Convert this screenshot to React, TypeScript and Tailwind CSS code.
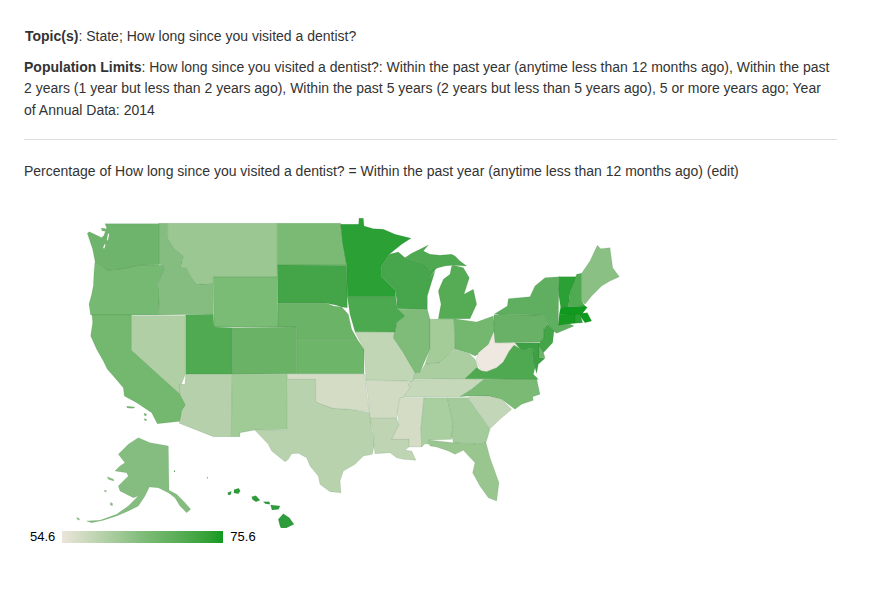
type Shape = { id: string; fill: string; pts: string }

const west: Shape[] = [
  { id: 'OR', fill: '#76b972', pts: '75,165 103,185 118,192 160,186 210,176 280,178 284,190 262,238 268,250 266,327 62,327 57,295 65,265 70,240 72,200' },
  { id: 'ID', fill: '#85bd80', pts: '266,52 293,52 293,95 310,125 340,150 333,185 348,185 365,215 380,235 430,232 430,325 266,327 268,250 262,238 284,190 280,178 266,175' },
  { id: 'MT', fill: '#9ac792', pts: '293,52 622,52 622,213 430,213 430,232 380,235 365,215 348,185 333,185 340,150 310,125 293,95' },
  { id: 'WY', fill: '#7abb75', pts: '430,213 622,213 624,363 432,363' },
  { id: 'ND', fill: '#7aba74', pts: '622,52 812,52 820,110 830,177 622,177' },
  { id: 'SD', fill: '#43a547', pts: '622,177 830,178 832,305 815,303 800,298 770,292 624,292' },
  { id: 'NE', fill: '#6bb367', pts: '624,292 770,292 790,300 815,303 835,325 845,370 862,400 680,400 680,363 624,363' },
  { id: 'KS', fill: '#6db568', pts: '680,400 862,400 882,430 882,503 680,503' },
  { id: 'CO', fill: '#6ab266', pts: '487,365 680,363 680,503 487,505' },
  { id: 'UT', fill: '#50aa52', pts: '347,327 430,325 432,363 487,365 487,505 347,505' },
  { id: 'NV', fill: '#b0cfa5', pts: '184,329 346,329 346,505 334,535 330,565 184,433' },
  { id: 'CA', fill: '#74b870', pts: '66,327 184,327 184,433 330,565 347,597 335,615 338,645 262,653 245,620 200,590 163,570 160,545 130,510 112,490 100,465 80,430 62,390 68,350' },
  { id: 'AZ', fill: '#b5d0aa', pts: '347,505 487,505 484,692 430,692 328,652 335,615 347,597 330,565 328,535 345,535' },
  { id: 'NM', fill: '#a0ca96', pts: '487,505 652,505 652,670 555,672 510,680 510,692 484,692' },
  { id: 'CH1', fill: '#74b870', pts: '170,601 195,603 190,607 172,606' },
  { id: 'CH2', fill: '#74b870', pts: '222,622 230,624 228,630 223,628' },
  { id: 'CH3', fill: '#74b870', pts: '222,638 230,640 228,645 224,643' },
]

const northwest: Shape[] = [
  { id: 'WA', fill: '#6fb46c', pts: '75,23 237,23 237,146 180,147 130,158 85,163 72,155 45,135 38,100 22,52 28,47 50,58 65,65 72,58 80,35' },
  { id: 'SD1', fill: '#ffffff', pts: '84,52 88,54 84,74 80,72' },
  { id: 'SD2', fill: '#ffffff', pts: '73,84 77,86 73,98 69,96' },
  { id: 'SD3', fill: '#6fb46c', pts: '64,36 78,38 76,46 66,44' },
]

const south: Shape[] = [
  { id: 'TX', fill: '#b8d2ad', pts: '173,55 257,55 257,122 275,130 310,142 360,145 420,155 422,175 425,205 435,240 427,280 400,285 375,310 340,330 330,360 333,395 300,392 270,370 265,345 240,315 230,290 205,277 185,278 175,295 165,302 125,270 115,250 75,208 172,206' },
  { id: 'OK', fill: '#d4dcc6', pts: '172,40 405,40 410,100 418,152 360,145 310,142 275,130 257,122 257,55 172,55' },
]

const east: Shape[] = [
  { id: 'MO', fill: '#c0d6b5', pts: '45,378 165,378 160,395 190,440 220,480 225,500 218,535 200,525 78,522 72,430' },
  { id: 'IL', fill: '#7fbc79', pts: '172,310 262,310 270,340 270,430 252,470 240,500 225,500 190,440 160,395 170,350 195,330' },
  { id: 'IN', fill: '#a3cc99', pts: '270,340 342,338 345,430 320,450 300,470 255,475 270,430' },
  { id: 'OH', fill: '#74b870', pts: '342,338 410,348 460,330 465,375 440,430 405,450 385,440 345,430' },
  { id: 'KY', fill: '#aacea0', pts: '345,432 385,440 405,460 415,488 375,518 220,520 225,500 240,500 255,475 300,470 320,450' },
  { id: 'TN', fill: '#c5d8ba', pts: '200,535 222,522 375,518 432,520 395,550 360,572 190,573 210,545' },
  { id: 'NC', fill: '#7bba75', pts: '432,520 590,518 600,565 578,572 580,583 545,595 525,610 485,580 445,570 385,570 360,572 395,550' },
  { id: 'SC', fill: '#c3d7b8', pts: '385,572 445,570 485,580 515,610 480,640 450,668 420,622' },
  { id: 'AR', fill: '#d1dbc3', pts: '78,523 200,525 210,545 190,573 175,610 170,637 90,637 88,610' },
]

const lakes: Shape[] = [
  { id: 'MN', fill: '#2ba034', pts: '2,25 56,25 57,7 70,7 72,30 100,38 130,40 165,55 213,67 185,85 148,115 125,150 125,182 165,222 167,242 22,242 20,148 8,80' },
  { id: 'WI', fill: '#47a64b', pts: '148,115 175,108 195,125 240,140 262,155 270,165 292,152 262,195 285,165 262,240 262,280 172,278 170,250 165,222 125,182 125,150' },
  { id: 'UP', fill: '#4fa951', pts: '195,125 215,112 240,100 265,87 250,105 270,115 300,118 335,115 345,120 360,135 380,150 340,148 315,150 295,155 270,165 240,140' },
  { id: 'MI', fill: '#55ac55', pts: '340,148 370,155 388,185 372,235 400,220 410,265 390,308 295,308 303,265 295,225 310,190 330,175 335,150' },
  { id: 'IA', fill: '#4da950', pts: '22,242 167,242 172,278 195,300 170,320 165,348 45,347 30,295' },
]

const northeast: Shape[] = [
  { id: 'PA', fill: '#68b166', pts: '72,238 90,234 220,238 232,262 222,280 222,318 72,320' },
  { id: 'NY', fill: '#60af60', pts: '72,235 112,210 115,188 180,182 195,150 225,125 270,122 266,175 265,265 300,265 312,270 260,292 250,285 232,262 220,238 90,234' },
  { id: 'WV', fill: '#eee8e0', pts: '72,285 75,320 105,322 135,320 150,338 132,328 118,345 100,378 80,395 50,407 35,405 18,375 25,350 55,325' },
  { id: 'VA', fill: '#4ea951', pts: '-15,428 20,395 35,405 50,407 80,395 100,378 118,345 132,328 150,338 165,345 178,335 190,340 187,375 195,395 190,415 205,430' },
  { id: 'MD', fill: '#3da044', pts: '135,320 207,320 207,365 225,367 205,385 200,412 195,395 187,375 190,340 178,335 165,345 150,338' },
  { id: 'DE', fill: '#6fb46c', pts: '207,322 222,355 225,365 207,365' },
  { id: 'NJ', fill: '#43a547', pts: '222,280 232,263 252,285 248,320 220,350 205,325 222,305' },
  { id: 'VT', fill: '#2ba034', pts: '268,122 320,122 300,170 295,212 272,214 266,175' },
  { id: 'NH', fill: '#50aa52', pts: '320,115 335,112 335,195 345,210 295,212 300,170' },
  { id: 'ME', fill: '#8bc084', pts: '335,112 360,75 382,28 392,38 420,35 428,95 448,122 420,135 395,150 365,180 345,205 335,195' },
  { id: 'MA', fill: '#0f9a1f', pts: '272,214 345,210 352,214 338,232 352,230 365,255 345,260 330,240 268,235' },
  { id: 'CT', fill: '#189a22', pts: '268,235 315,235 315,262 265,268' },
  { id: 'RI', fill: '#2ba034', pts: '315,235 330,235 338,260 315,262' },
]

const gulf: Shape[] = [
  { id: 'LA', fill: '#bed4b3', pts: '90,52 170,52 177,72 155,115 207,115 210,135 195,148 215,150 228,178 190,175 170,170 150,155 105,158 100,120 103,110' },
  { id: 'MS', fill: '#d4dcc6', pts: '180,-10 252,-10 243,80 245,138 207,138 207,115 155,115 177,72 172,30' },
  { id: 'AL', fill: '#a9ce9f', pts: '252,-10 322,-10 340,70 335,115 265,117 268,130 255,128 245,138 243,80' },
  { id: 'GA', fill: '#a4cb9b', pts: '322,-10 385,-10 420,40 450,85 438,125 415,130 340,125 335,100 340,70' },
  { id: 'FL', fill: '#99c68f', pts: '265,117 340,125 415,130 438,125 450,170 477,245 470,300 445,290 420,255 398,215 405,185 370,148 345,160 325,150 290,138 270,135' },
]

const alaska: Shape[] = [
  { id: 'AK', fill: '#85bd80', pts: '205,20 240,35 295,45 297,178 320,190 345,215 362,235 350,245 330,225 315,200 295,185 265,170 238,168 225,195 205,225 175,240 140,255 100,268 65,275 50,270 90,268 140,250 175,225 205,195 190,200 150,180 145,165 175,135 170,125 135,120 150,105 165,95 145,70 175,40' },
  { id: 'AK2', fill: '#85bd80', pts: '112,137 130,145 132,150 115,145' },
  { id: 'AK3', fill: '#85bd80', pts: '104,177 110,180 108,183 103,181' },
  { id: 'AK4', fill: '#85bd80', pts: '122,214 128,218 127,224 121,222' },
  { id: 'AK5', fill: '#85bd80', pts: '20,259 29,264 27,268 21,264' },
]

const hawaii: Shape[] = [
  { id: 'HI1', fill: '#2d9c3a', pts: '790,248 808,260 822,280 800,290 788,300 780,285 775,265' },
  { id: 'HI2', fill: '#2d9c3a', pts: '752,222 780,225 776,235 756,237' },
  { id: 'HI3', fill: '#2d9c3a', pts: '730,212 748,212 750,220 736,218' },
  { id: 'HI4', fill: '#2d9c3a', pts: '695,197 708,194 720,208 708,212 698,206' },
  { id: 'HI5', fill: '#2d9c3a', pts: '642,176 656,172 661,180 655,188 642,186' },
  { id: 'HI6', fill: '#2d9c3a', pts: '623,185 634,181 632,191 625,192' },
  { id: 'HI7', fill: '#2d9c3a', pts: '462,119 465,119 465,122 462,122' },
  { id: 'HI8', fill: '#85bd80', pts: '561,139 564,139 564,142 561,142' },
]

function Shapes({ states, transform }: { states: Shape[]; transform: string }) {
  return (
    <g transform={transform}>
      {states.map((s) => (
        <polygon
          key={s.id}
          points={s.pts}
          fill={s.fill}
          stroke="#0a4a0a"
          strokeOpacity={0.1}
          strokeWidth={1}
          vectorEffect="non-scaling-stroke"
        />
      ))}
    </g>
  )
}

export default function App() {
  return (
    <div className="w-[874px] h-[597px] bg-white pl-6 pt-[26px] text-[14px] leading-[21.5px] text-[#333] font-['Liberation_Sans',Arial,sans-serif]">
      <div className="w-[813px]">
        <p className="ml-px">
          <b>Topic(s)</b>: State; How long since you visited a dentist?
        </p>
        <p className="mt-[9px] pr-1">
          <b>Population Limits</b>: How long since you visited a dentist?: Within the past year (anytime less than 12 months ago), Within the past 2 years (1 year but less than 2 years ago), Within the past 5 years (2 years but less than 5 years ago), 5 or more years ago; Year of Annual Data: 2014
        </p>
        <hr className="mt-[18px] mb-[21px] border-[#ddd]" />
        <p>Percentage of How long since you visited a dentist? = Within the past year (anytime less than 12 months ago) (edit)</p>
      </div>
      <svg className="-ml-6 mt-[23px] block" width="640" height="322" viewBox="0 205 640 322">
        <Shapes states={west} transform="translate(70 205) scale(0.3333)" />
        <Shapes states={northwest} transform="translate(80 215) scale(0.3333)" />
        <Shapes states={south} transform="translate(230 360) scale(0.3333)" />
        <Shapes states={east} transform="translate(340 205) scale(0.3333)" />
        <Shapes states={lakes} transform="translate(340 215) scale(0.3333)" />
        <Shapes states={gulf} transform="translate(340 400) scale(0.3333)" />
        <Shapes states={northeast} transform="translate(470 235) scale(0.3333)" />
        <Shapes states={alaska} transform="translate(70 430) scale(0.3333)" />
        <Shapes states={hawaii} transform="translate(20 430) scale(0.3333)" />
      </svg>
      <div className="flex items-center gap-[7px] text-[13px] leading-[14px] text-black mt-[2px] ml-[6px]">
        <span>54.6</span>
        <div className="w-[161px] h-3 bg-gradient-to-r from-[#ebe5db] via-[#7fbc79] to-[#0f9a1f]" />
        <span>75.6</span>
      </div>
    </div>
  )
}
